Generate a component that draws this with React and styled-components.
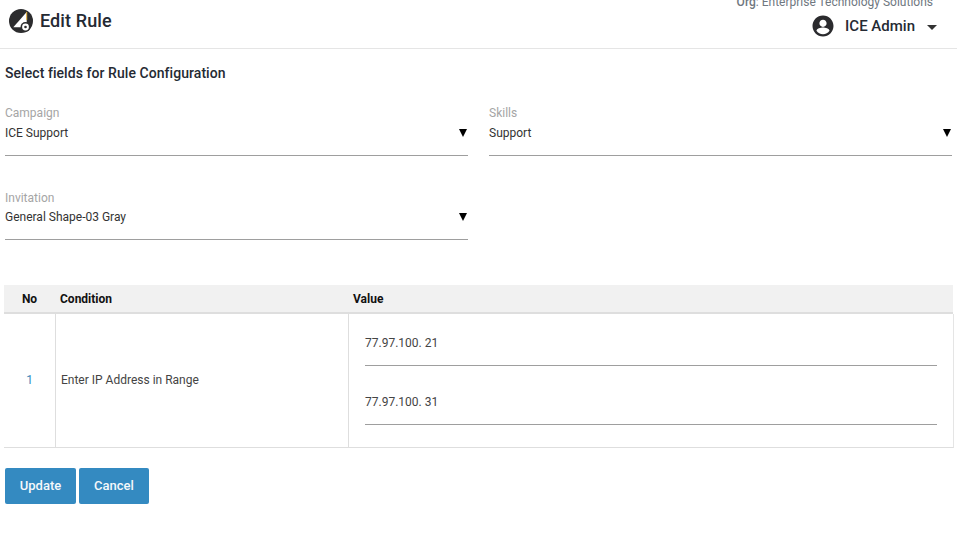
import React from 'react';
import styled, { createGlobalStyle } from 'styled-components';

const Global = createGlobalStyle`
  html, body { margin: 0; padding: 0; background: #fff; }
  body { font-family: Roboto, "Liberation Sans", sans-serif; color: #333; overflow: hidden; }
  * { box-sizing: border-box; }
`;

const Page = styled.div`
  width: 957px;
  height: 534px;
  overflow: hidden;
`;

const Header = styled.header`
  height: 49px;
  border-bottom: 1px solid #e5e5e5;
  display: flex;
  justify-content: space-between;
  padding: 0 20px 0 8px;
`;

const TitleBlock = styled.div`
  display: flex;
  align-items: center;
  gap: 6px;
  height: 42px;
`;

const Title = styled.h1`
  margin: 0;
  font-size: 18px;
  font-weight: 500;
  letter-spacing: 0.1px;
  line-height: 24px;
  color: #252a33;
`;

const UserBlock = styled.div`
  display: flex;
  flex-direction: column;
  align-items: flex-end;
  margin-top: -5px;
`;

const Org = styled.div`
  font-size: 12px;
  line-height: 14px;
  color: #6f7780;
  margin-right: 4px;
  & b { font-weight: 500; }
`;

const UserRow = styled.div`
  display: flex;
  align-items: center;
  margin-top: 5px;
`;

const UserName = styled.span`
  margin-left: 10px;
  font-size: 15px;
  font-weight: 500;
  color: #252a33;
  line-height: 20px;
`;

const Caret = styled.span`
  margin-left: 12px;
  margin-top: 3px;
  width: 0;
  height: 0;
  border-left: 5px solid transparent;
  border-right: 5px solid transparent;
  border-top: 5px solid #333;
`;

const Content = styled.main`
  padding: 0 4px 0 5px;
`;

const SectionTitle = styled.h2`
  margin: 16px 0 0;
  font-size: 14px;
  font-weight: 500;
  letter-spacing: 0.06px;
  line-height: 16px;
  color: #252a33;
`;

const FieldGrid = styled.div`
  display: grid;
  grid-template-columns: 463px 463px;
  column-gap: 21px;
  row-gap: 25px;
  margin-top: 16px;
`;

const Field = styled.div`
  height: 59px;
  padding-top: ${p => p.$top}px;
  border-bottom: 1px solid #9e9e9e;
`;

const Label = styled.div`
  font-size: 12px;
  line-height: 16px;
  color: #a5a5a5;
`;

const Value = styled.div`
  margin-top: ${p => p.$gap}px;
  font-size: 12px;
  line-height: 16px;
  color: #333;
  display: flex;
  justify-content: space-between;
  align-items: center;
`;

const Arrow = styled.span`
  width: 0;
  height: 0;
  margin-right: 1px;
  border-left: 4px solid transparent;
  border-right: 4px solid transparent;
  border-top: 8px solid #000;
`;

const Table = styled.div`
  margin: 45px -1px 0 -1px;
`;

const HeadRow = styled.div`
  display: grid;
  grid-template-columns: 51px 293px 1fr;
  height: 29px;
  padding-top: 1px;
  margin-right: 1px;
  background: #f1f1f1;
  border-bottom: 2px solid #dedede;
  align-items: center;
`;

const HeadCell = styled.div`
  font-size: 12px;
  font-weight: 700;
  color: #111;
  line-height: 26px;
  padding-left: ${p => p.$pad}px;
  text-align: ${p => p.$center ? 'center' : 'left'};
`;

const BodyRow = styled.div`
  display: grid;
  grid-template-columns: 52px 293px 1fr;
  height: 134px;
  border-bottom: 1px solid #dedede;
  border-right: 1px solid #e5e5e5;
`;

const Cell = styled.div`
  display: flex;
  align-items: center;
  font-size: 12px;
  color: #444;
  border-right: 1px solid #dedede;
  padding: 0 0 1px 5px;
`;

const NoCell = styled(Cell)`
  justify-content: center;
  padding-left: 0;
  color: #3a8bbd;
`;

const ValueCell = styled.div`
  padding: 0 16px;
`;

const IpField = styled.div`
  height: ${p => p.$h}px;
  border-bottom: 1px solid #9e9e9e;
  padding-top: ${p => p.$top}px;
  font-size: 12px;
  line-height: 16px;
  color: #444;
`;

const Actions = styled.div`
  display: flex;
  gap: 3px;
  margin-top: 20px;
`;

const Button = styled.button`
  height: 36px;
  width: ${p => p.$w}px;
  border: none;
  border-radius: 2px;
  background: #348ac1;
  color: #f4f8fb;
  font-family: inherit;
  font-size: 13px;
  font-weight: 500;
  padding: 0 0 2px;
`;

const Logo = () => (
  <svg width="26" height="26" viewBox="0 0 26 26">
    <circle cx="13" cy="13" r="12" fill="#2c2c2e" />
    <path d="M5.300 19.300 L18.700 3.900 L18.700 19.300 Z" fill="#fff" />
    <path d="M18.700 3.900 L18.700 12" stroke="#e8b23a" strokeWidth="1" fill="none" />
    <circle cx="17.500" cy="19" r="5" fill="#2c2c2e" />
    <circle cx="17.500" cy="19" r="3.400" fill="#fff" />
    <circle cx="17.500" cy="19" r="1.300" fill="#2c2c2e" />
  </svg>
);

const UserIcon = () => (
  <svg width="24" height="24" viewBox="0 0 24 24">
    <path fill="#2b2b2e" d="M12 1.500C6.200 1.500 1.500 6.200 1.500 12S6.200 22.500 12 22.500 22.500 17.800 22.500 12 17.800 1.500 12 1.500Zm0 4.200c2 0 3.600 1.600 3.600 3.600S14 12.900 12 12.900 8.400 11.300 8.400 9.300 10 5.700 12 5.700Zm0 14.500c-2.700 0-5.100-1.300-6.500-3.400C5.600 14.700 9.700 13.600 12 13.600s6.400 1.100 6.500 3.200c-1.400 2.100-3.800 3.400-6.500 3.400Z" />
  </svg>
);

export default function App() {
  return (
    <Page>
      <Global />
      <Header>
        <TitleBlock>
          <Logo />
          <Title>Edit Rule</Title>
        </TitleBlock>
        <UserBlock>
          <Org><b>Org</b>: Enterprise Technology Solutions</Org>
          <UserRow>
            <UserIcon />
            <UserName>ICE Admin</UserName>
            <Caret />
          </UserRow>
        </UserBlock>
      </Header>
      <Content>
        <SectionTitle>Select fields for Rule Configuration</SectionTitle>
        <FieldGrid>
          <Field $top={8}><Label>Campaign</Label><Value $gap={4}>ICE Support<Arrow /></Value></Field>
          <Field $top={8}><Label>Skills</Label><Value $gap={4}>Support<Arrow /></Value></Field>
          <Field $top={9}><Label>Invitation</Label><Value $gap={3}>General Shape-03 Gray<Arrow /></Value></Field>
        </FieldGrid>
        <Table>
          <HeadRow>
            <HeadCell $center>No</HeadCell>
            <HeadCell $pad={5}>Condition</HeadCell>
            <HeadCell $pad={5}>Value</HeadCell>
          </HeadRow>
          <BodyRow>
            <NoCell>1</NoCell>
            <Cell>Enter IP Address in Range</Cell>
            <ValueCell>
              <IpField $h={52} $top={21}>77.97.100. 21</IpField>
              <IpField $h={59} $top={28}>77.97.100. 31</IpField>
            </ValueCell>
          </BodyRow>
        </Table>
        <Actions>
          <Button $w={71}>Update</Button>
          <Button $w={70}>Cancel</Button>
        </Actions>
      </Content>
    </Page>
  );
}
